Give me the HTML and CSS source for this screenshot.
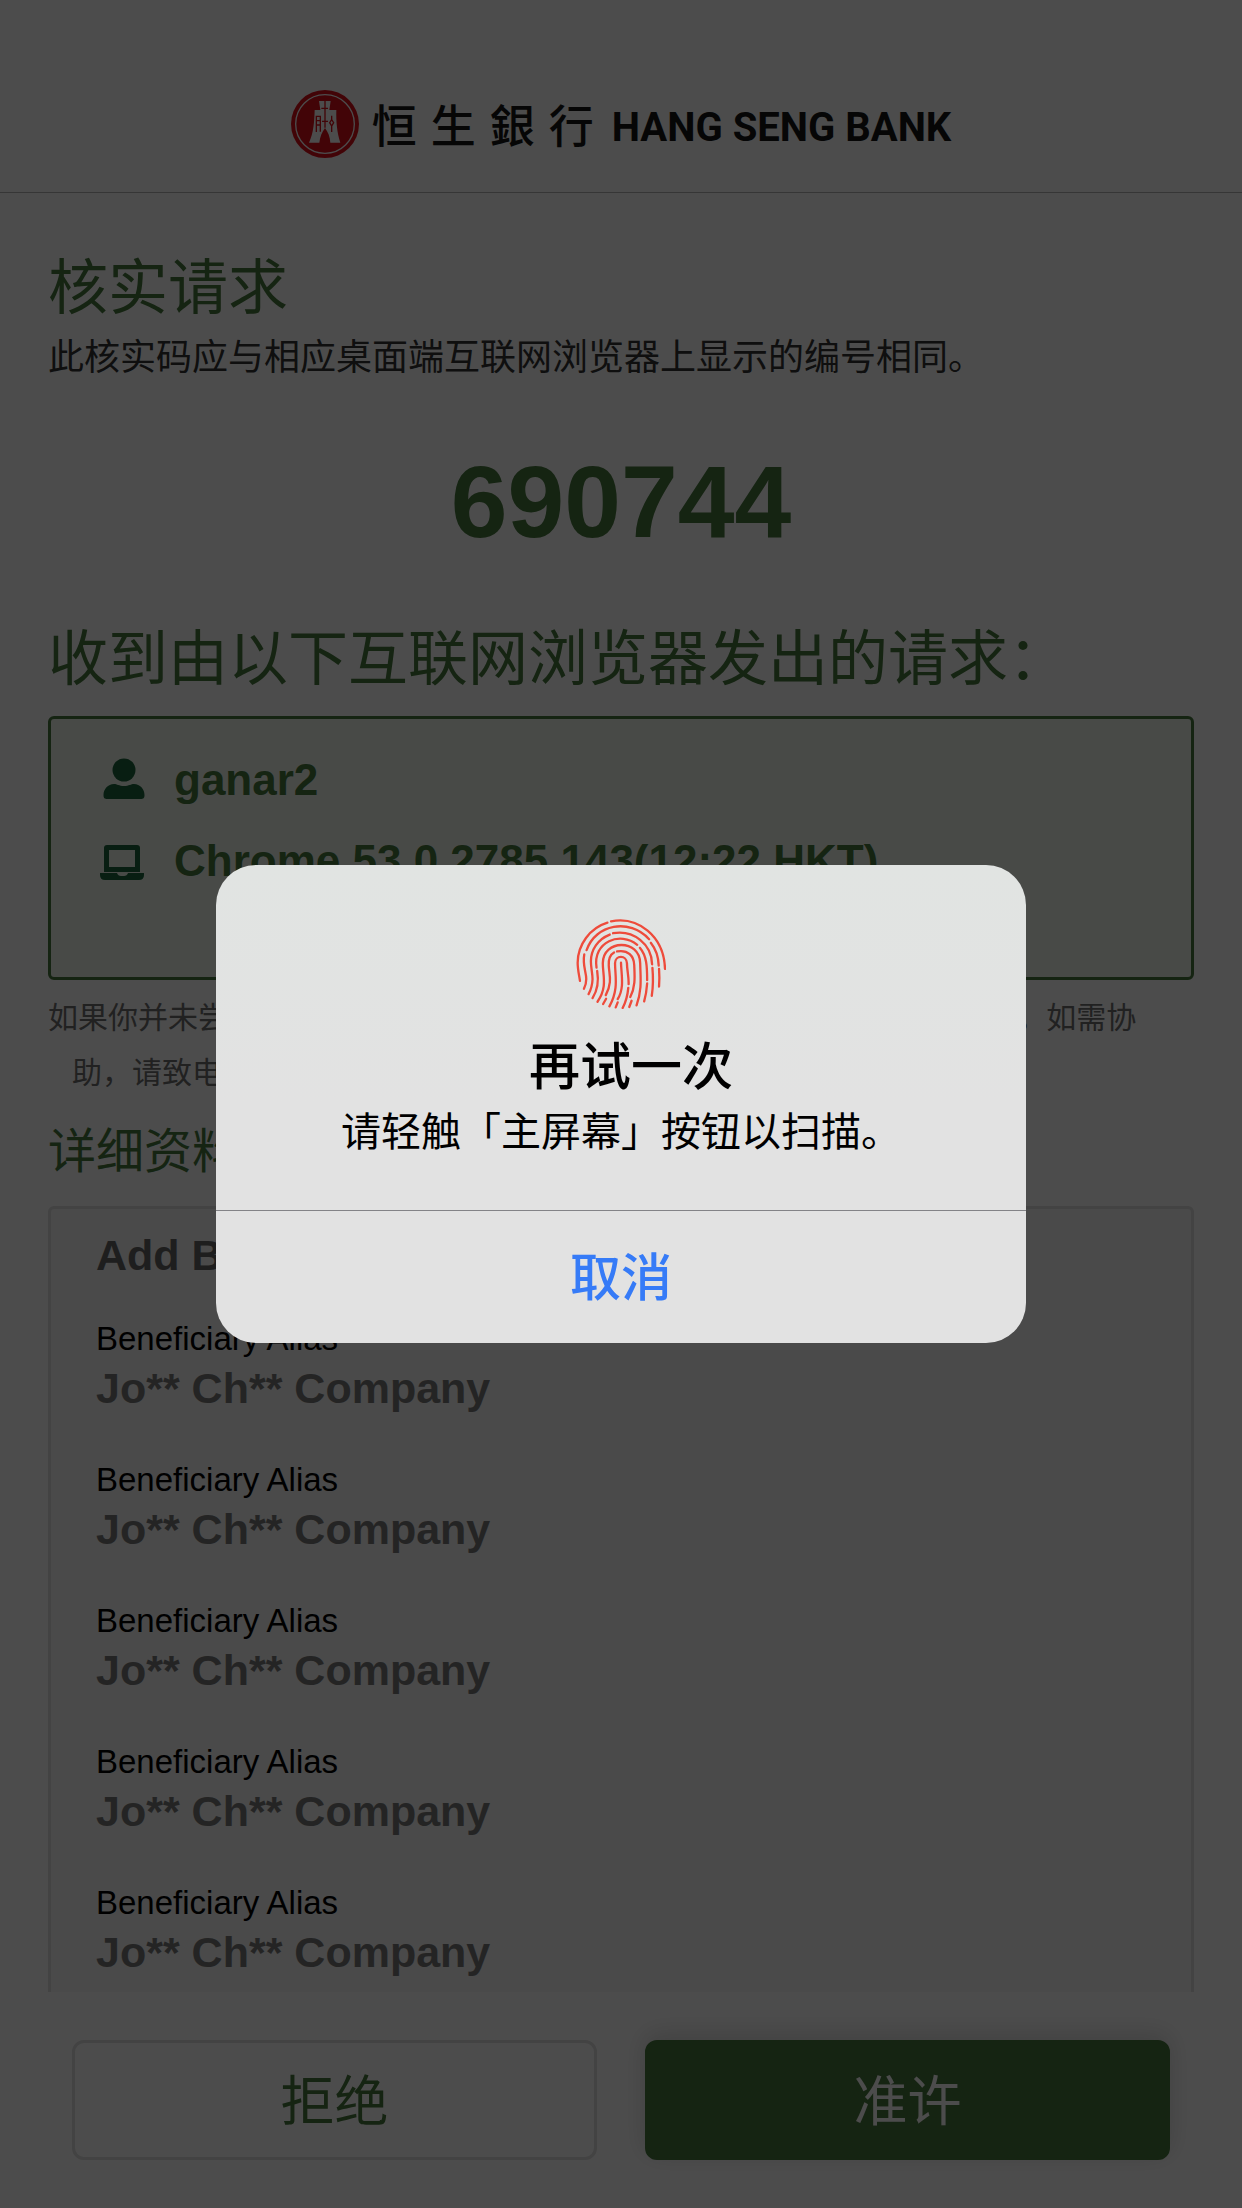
FILE: index.html
```html
<!DOCTYPE html>
<html lang="zh-CN">
<head>
<meta charset="utf-8">
<meta name="viewport" content="width=device-width, initial-scale=1">
<title>恒生银行 - 核实请求</title>
<link rel="stylesheet" href="styles.css">
</head>
<body>
<div class="page">
  <header class="header">
    <div class="brand">
      <svg class="brand-mark" viewBox="0 0 204 204" aria-hidden="true">
        <circle cx="102" cy="102" r="102" fill="#dc0f1a"/>
        <circle cx="102" cy="102" r="88" fill="none" stroke="#fff" stroke-width="4"/>
        <path fill="#fff" d="M84 33h35l-4 27h21c-1 34 2 68 12 98h-30c-1-18-7-32-16-44-9 12-15 26-17 44H54c14-30 16-64 17-98h17z"/>
        <path fill="none" stroke="#dc0f1a" stroke-width="4" d="M102 33v80M91 55h20M93 94h18M76 126V79h12v46M76 92h12M76 105h12M122 77v12l-6 9 6 10 6-10-6-9M122 108v18"/>
      </svg>
      <span class="brand-cn" lang="zh-HK"><span>恒</span><span>生</span><span>銀</span><span>行</span></span>
      <span class="brand-en">HANG SENG BANK</span>
    </div>
  </header>

  <main class="content">
    <h1 class="heading">核实请求</h1>
    <p class="lead">此核实码应与相应桌面端互联网浏览器上显示的编号相同。</p>
    <p class="code">690744</p>

    <h2 class="heading">收到由以下互联网浏览器发出的请求：</h2>
    <div class="request">
      <div class="request-row">
        <svg class="request-icon" viewBox="0 0 48 48" aria-hidden="true">
          <circle cx="25" cy="14" r="11.500"/>
          <path d="M15 28c3 0 5 2 10 2s7-2 10-2c6 0 10.500 5 10.500 11 0 3-1 4-4 4h-33c-3 0-4-1-4-4 0-6 4.500-11 10.500-11z"/>
        </svg>
        <span>ganar2</span>
      </div>
      <div class="request-row">
        <svg class="request-icon" viewBox="0 0 48 48" aria-hidden="true">
          <path fill-rule="evenodd" d="M8 8h30q3 0 3 3v24H5V11q0-3 3-3zm2 5v17h26V13z"/>
          <path d="M1 36h17q1 3 4 3h3q3 0 4-3h16v2q0 5-5 5H6q-5 0-5-5z"/>
        </svg>
        <span>Chrome 53.0.2785.143(12:22 HKT)</span>
      </div>
    </div>
    <p class="note">如果你并未尝试登录或进行交易，请勿批准此项请求，并立即按 「拒绝」。如需协助，请致电客户服务热线 (852) 2822 0228。</p>

    <h3 class="subheading">详细资料</h3>
    <section class="details">
      <h4 class="details-title">Add Beneficiary</h4>
      <dl class="details-list">
        <div><dt>Beneficiary Alias</dt><dd>Jo** Ch** Company</dd></div>
        <div><dt>Beneficiary Alias</dt><dd>Jo** Ch** Company</dd></div>
        <div><dt>Beneficiary Alias</dt><dd>Jo** Ch** Company</dd></div>
        <div><dt>Beneficiary Alias</dt><dd>Jo** Ch** Company</dd></div>
        <div><dt>Beneficiary Alias</dt><dd>Jo** Ch** Company</dd></div>
      </dl>
    </section>
  </main>

  <footer class="actions">
    <button class="action" type="button">拒绝</button>
    <button class="action action-primary" type="button">准许</button>
  </footer>
</div>

<div class="scrim">
  <div class="alert" role="alertdialog" aria-modal="true" aria-labelledby="alert-title" aria-describedby="alert-message">
    <div class="alert-body">
      <svg class="alert-icon" viewBox="46 56 272 272" aria-hidden="true">
        <g fill="none" stroke="#ee4b3b" stroke-width="7" stroke-linecap="round">
          <path d="M141 67C88 83 51 134 51 188c0 20 4 35 7 55"/>
          <path d="M152 63C232 47 312 106 315 207"/>
          <path d="M78 150C105 72 207 52 267 117"/>
          <path d="M272 128C288 148 295 170 296 197M297 207Q299 235 297 260"/>
          <path d="M71 163C65 195 77 216 77 237Q77 253 70 267"/>
          <path d="M148 103C112 117 91 149 91 184c0 20 5 36 5 54q-1 25-12 45"/>
          <path d="M158 99C220 88 275 132 276 193M277 204Q281 250 275 288"/>
          <path d="M108 203C96 124 180 92 231 134"/>
          <path d="M239 143C260 168 261 200 261 241M261 251Q259 280 252 305"/>
          <path d="M110 213Q118 260 96 295"/>
          <path d="M111 306C142 262 127 226 127 190c0-73 112-75 113 0 1 44 6 80-11 127"/>
          <path d="M161 157C147 165 144 178 145 196c1 28 12 50-9 90M137 297L128 313"/>
          <path d="M170 154C204 148 221 168 222 195c1 30 5 64-12 97M214 303L207 322"/>
          <path d="M147 320C176 268 164 228 164 190c0-26 35-26 36 0 0 20 6 42 5 63M204 264Q201 298 187 325"/>
          <path d="M182 188C183 225 193 265 172 298M172 308L166 323"/>
        </g>
      </svg>
      <h2 class="alert-title" id="alert-title">再试一次</h2>
      <p class="alert-message" id="alert-message">请轻触「主屏幕」按钮以扫描。</p>
    </div>
    <button class="alert-button" type="button">取消</button>
  </div>
</div>
</body>
</html>
```
FILE: styles.css
```css
:root {
  --green: #49783f;
  --line: #dfdfdf;
}

* {
  box-sizing: border-box;
  margin: 0;
  padding: 0;
}

body {
  background: #fff;
  color: #333;
  font-family: "Liberation Sans", "Noto Sans CJK SC", sans-serif;
  text-spacing-trim: space-all;
}

button {
  font: inherit;
  cursor: pointer;
}

.page {
  display: flex;
  flex-direction: column;
  height: 100vh;
}

/* Header */
.header {
  display: flex;
  justify-content: center;
  padding: 90px 48px 34px;
  border-bottom: 1px solid #b5b5b5;
}

.brand {
  display: flex;
  align-items: center;
  color: #141414;
}

.brand-mark {
  width: 68px;
  height: 68px;
}

.brand-cn {
  display: flex;
  gap: 14px;
  margin: 0 18px 0 13px;
  font: 500 45px/68px "Noto Sans CJK TC", sans-serif;
}

.brand-en {
  padding-top: 8px;
  font: 700 40px/60px Roboto, sans-serif;
}

/* Content */
.content {
  flex: 1;
  min-height: 0;
  overflow: hidden;
  padding: 60px 48px 0;
}

.heading {
  color: var(--green);
  font-size: 60px;
  font-weight: 400;
  line-height: 72px;
}

.lead {
  margin-top: 9px;
  font-size: 36px;
  line-height: 48px;
}

.code {
  margin: 60px 0 62px;
  color: var(--green);
  font-size: 102px;
  font-weight: 700;
  line-height: 120px;
  text-align: center;
}

.request {
  display: flex;
  flex-direction: column;
  gap: 33px;
  margin-top: 20px;
  padding: 37px 48px 92px;
  border: 3px solid var(--green);
  border-radius: 6px;
  background: #f2f7ef;
}

.request-row {
  display: flex;
  align-items: center;
  gap: 27px;
  color: var(--green);
  font-size: 44px;
  font-weight: 700;
  line-height: 48px;
}

.request-icon {
  width: 48px;
  height: 48px;
  fill: #1b673c;
}

.note {
  margin-top: 10px;
  padding: 0 48px 0 24px;
  color: #707070;
  font-size: 30px;
  line-height: 55px;
  text-indent: -24px;
}

.subheading {
  margin-top: 22px;
  color: var(--green);
  font-size: 48px;
  font-weight: 400;
  line-height: 60px;
}

.details {
  margin-top: 24px;
  padding: 22px 45px 48px;
  border: 3px solid var(--line);
  border-radius: 6px;
  background: #f7f7f7;
}

.details-title {
  color: #666;
  font-size: 43px;
  line-height: 48px;
}

.details-list {
  display: grid;
  gap: 48px;
  margin-top: 40px;
}

.details-list dt {
  color: #000;
  font-size: 33px;
  line-height: 40px;
}

.details-list dd {
  margin-top: 5px;
  color: #7b7b7b;
  font-size: 43px;
  font-weight: 700;
  line-height: 48px;
}

/* Footer buttons */
.actions {
  display: flex;
  gap: 48px;
  padding: 48px 72px;
}

.action {
  flex: 1;
  height: 120px;
  padding-bottom: 6px;
  border: 3px solid var(--line);
  border-radius: 12px;
  background: #fff;
  color: var(--green);
  font-size: 54px;
}

.action-primary {
  border-color: var(--green);
  background: var(--green);
  box-shadow: 0 -6px 24px rgba(0, 0, 0, 0.15);
  color: #fff;
}

/* Alert */
.scrim {
  position: fixed;
  inset: 0;
  display: flex;
  align-items: center;
  justify-content: center;
  background: rgba(0, 0, 0, 0.7);
}

.alert {
  width: 810px;
  max-width: 90%;
  overflow: hidden;
  border-radius: 40px;
  background: linear-gradient(#e1e4e2, #e2e2e2 50%);
  color: #000;
  text-align: center;
}

.alert-body {
  padding: 54px 48px;
  border-bottom: 1px solid #838387;
}

.alert-icon {
  display: block;
  width: 90px;
  height: 90px;
  margin: 0 auto;
}

.alert-title {
  margin-top: 29px;
  padding-left: 20px;
  font-size: 51px;
  font-weight: 500;
  line-height: 60px;
}

.alert-message {
  margin-top: 10px;
  font-size: 40px;
  line-height: 48px;
}

.alert-button {
  display: block;
  width: 100%;
  height: 132px;
  padding-bottom: 6px;
  border: 0;
  background: none;
  color: #367bf7;
  font-size: 51px;
  font-weight: 500;
}
```
